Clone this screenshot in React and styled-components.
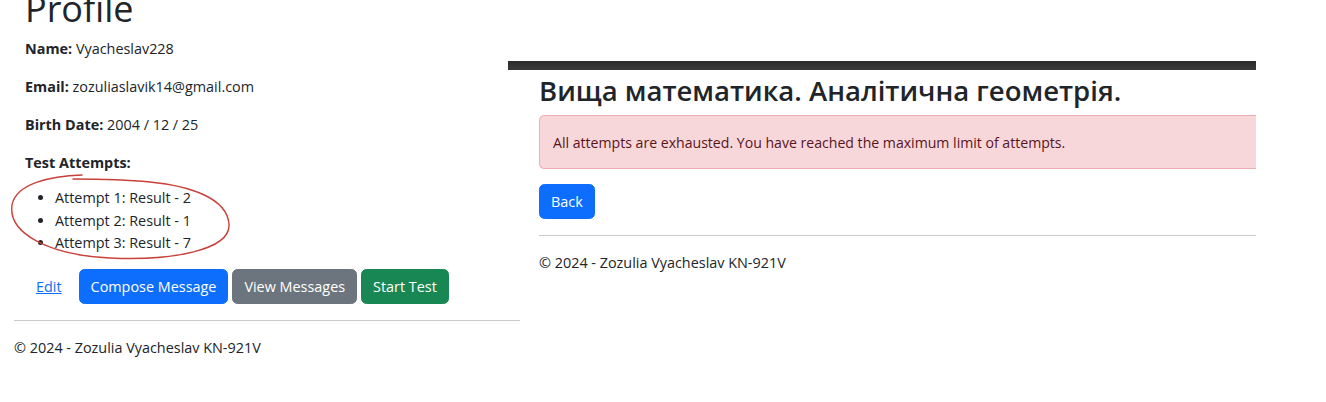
import React from "react";
import styled, { createGlobalStyle } from "styled-components";

const GlobalStyle = createGlobalStyle`
  html, body {
    margin: 0;
    padding: 0;
    background: #fff;
  }

  body {
    font-family: "Open Sans", "Noto Sans", sans-serif;
    font-size: 14.4px;
    line-height: 1.6;
    color: #212529;
    overflow: hidden;
  }
`;

const Page = styled.div`
  display: flex;
  align-items: flex-start;
  width: 1326px;
  height: 402px;
  overflow: hidden;
`;

const LeftPane = styled.div`
  width: 494px;
  padding-left: 14px;
  margin-top: -13px;
  flex-shrink: 0;
`;

const ProfileMain = styled.main`
  position: relative;
  padding-left: 11px;
`;

const PageTitle = styled.h1`
  margin: 0 0 7px;
  font-size: 36px;
  font-weight: 500;
  line-height: 1.2;
`;

const Field = styled.p`
  margin: 0 0 15px;
  line-height: 23px;
`;

const Label = styled.strong`
  font-weight: 700;
`;

const AttemptList = styled.ul`
  margin: -2px 0 14px;
  padding-left: 30px;
  line-height: 22.5px;
`;

const Actions = styled.div`
  display: flex;
  align-items: center;
  gap: 4px;
`;

const Button = styled.button`
  height: 35px;
  padding: 0 11px;
  border: 1px solid ${(p) => p.$bg};
  border-radius: 5.5px;
  background: ${(p) => p.$bg};
  color: #fff;
  font-family: inherit;
  font-size: 14.4px;
  cursor: pointer;
`;

const LinkButton = styled.a`
  padding: 0 11px;
  margin-right: 2px;
  color: #0d6efd;
  text-decoration: underline;
  line-height: 35px;
`;

const Rule = styled.hr`
  margin: 16px ${(p) => p.$pull || 0} 0 0;
  border: 0;
  border-top: 1px solid #c9cacb;
`;

const Footer = styled.footer`
  padding: 16px 0 15px;
  line-height: 22.5px;
`;

const Scribble = styled.svg`
  position: absolute;
  left: -14px;
  top: 0;
  overflow: visible;
  pointer-events: none;
`;

const RightPane = styled.div`
  width: 717px;
  padding-left: 31px;
  margin-top: 61px;
  flex-shrink: 0;
`;

const TopBar = styled.div`
  height: 9px;
  margin-left: -31px;
  background: linear-gradient(#2b2b2b, #3a3a3a);
`;

const TestTitle = styled.h2`
  margin: 4px 0 8px;
  font-size: 27.5px;
  font-weight: 600;
  line-height: 1.2;
`;

const Alert = styled.div`
  padding: 16px 13px 15px;
  margin-bottom: 15px;
  border: 1px solid #f1aeb5;
  border-radius: 5.5px 0 0 5.5px;
  border-right: 0;
  background: #f8d7da;
  color: #58151c;
  font-size: 14.1px;
  line-height: 21px;
`;

export default function App() {
  const attempts = [2, 1, 7];
  return (
    <>
      <GlobalStyle />
      <Page>
        <LeftPane>
          <ProfileMain>
            <PageTitle>Profile</PageTitle>
            <Field>
              <Label>Name:</Label> Vyacheslav228
            </Field>
            <Field>
              <Label>Email:</Label> zozuliaslavik14@gmail.com
            </Field>
            <Field>
              <Label>Birth Date:</Label> 2004 / 12 / 25
            </Field>
            <Field>
              <Label>Test Attempts:</Label>
            </Field>
            <AttemptList>
              {attempts.map((r, i) => (
                <li key={i}>
                  Attempt {i + 1}: Result - {r}
                </li>
              ))}
            </AttemptList>
            <Actions>
              <LinkButton href="#">Edit</LinkButton>
              <Button $bg="#0d6efd">Compose Message</Button>
              <Button $bg="#6c757d">View Messages</Button>
              <Button $bg="#198754">Start Test</Button>
            </Actions>
            <Scribble width="240" height="300" viewBox="0 0 240 300">
              <path
                d="M82 188 C52 189 16 196 12 218 C8 246 48 268 110 271 C172 274 231 263 229 237 C227 211 190 199 150 195 C120 192 92 192 73 192"
                fill="none"
                stroke="#c8413a"
                strokeWidth="1.4"
                strokeLinecap="round"
              />
            </Scribble>
          </ProfileMain>
          <Rule $pull="-12px" />
          <Footer>© 2024 - Zozulia Vyacheslav KN-921V</Footer>
        </LeftPane>
        <RightPane>
          <TopBar />
          <TestTitle>Вища математика. Аналітична геометрія.</TestTitle>
          <Alert>
            All attempts are exhausted. You have reached the maximum limit of
            attempts.
          </Alert>
          <Button $bg="#0d6efd">Back</Button>
          <Rule />
          <Footer>© 2024 - Zozulia Vyacheslav KN-921V</Footer>
        </RightPane>
      </Page>
    </>
  );
}
